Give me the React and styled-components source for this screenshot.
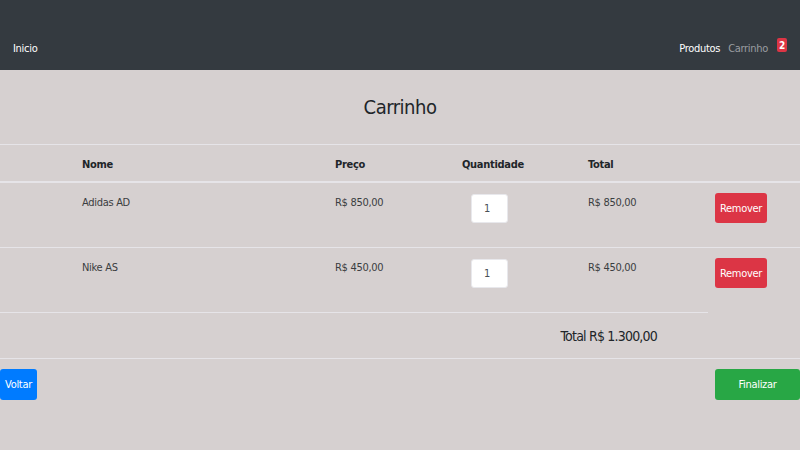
import React from 'react'
import styled, { createGlobalStyle } from 'styled-components'

const Global = createGlobalStyle`
  body {
    margin: 0;
    background: #d6d0d0;
    font-family: "DejaVu Sans Condensed", "Liberation Sans", sans-serif;
    color: #212529;
    letter-spacing: -0.3px;
  }
`

const Nav = styled.nav`
  height: 70px;
  background: #343a40;
  display: flex;
  align-items: flex-end;
  justify-content: space-between;
  padding: 0 13px 15px 13px;
  box-sizing: border-box;
  font-size: 11px;
`

const NavLinks = styled.div`
  display: flex;
  align-items: flex-end;
  gap: 8px;
`

const NavLink = styled.a`
  color: ${p => (p.muted ? '#9a9da1' : '#ffffff')};
  text-decoration: none;
  line-height: 13px;
`

const Badge = styled.span`
  background: #dc3545;
  color: #fff;
  font-weight: bold;
  font-size: 10px;
  border-radius: 2px;
  width: 10px;
  height: 14px;
  display: flex;
  align-items: center;
  justify-content: center;
  align-self: flex-start;
  margin-top: -4px;
  margin-left: 1px;
`

const Title = styled.h1`
  margin: 0;
  height: 74px;
  display: flex;
  align-items: center;
  justify-content: center;
  font-size: 20px;
  font-weight: normal;
  letter-spacing: -0.5px;
  color: #212529;
`

const Row = styled.div`
  display: grid;
  grid-template-columns: 70px 253px 127px 126px 127px 1fr;
  height: ${p => p.h}px;
  font-size: 11px;
`

const Cell = styled.div`
  border-top: 1px solid #e6e4e8;
  padding: ${p => p.pad || '13px 12px 0 12px'};
  color: ${p => (p.dim ? '#3a3d40' : '#212529')};
  font-weight: ${p => (p.bold ? 'bold' : 'normal')};
  ${p => p.head && 'display: flex; align-items: center; padding-top: 3px; border-bottom: 1px solid #e6e4e8;'}
`

const Blank = styled.div``

const QtyInput = styled.input`
  width: 37px;
  height: 29px;
  box-sizing: border-box;
  border: 1px solid #e8e8ec;
  border-radius: 3px;
  background: #fff;
  font-family: "DejaVu Sans Condensed", sans-serif;
  font-size: 11px;
  padding: 0 0 0 12px;
  color: #495057;
  margin-left: 9px;
`

const Button = styled.button`
  background: ${p => p.bg};
  border: none;
  border-radius: 3px;
  color: #fff;
  font-family: "DejaVu Sans Condensed", sans-serif;
  font-size: 11px;
  letter-spacing: -0.3px;
  height: ${p => p.h || 30}px;
  width: ${p => p.w}px;
  padding: 0;
`

const TotalCell = styled.div`
  grid-column: 1 / span 5;
  margin-right: -5px;
  border-top: 1px solid #e6e4e8;
  display: flex;
  align-items: center;
  justify-content: flex-end;
  padding-right: 51px;
  font-size: 14px;
  letter-spacing: -0.8px;
  color: #212529;
`

const Footer = styled.div`
  border-top: 1px solid #e6e4e8;
  display: flex;
  justify-content: space-between;
  padding-top: 10px;
`

const items = [
  { name: 'Adidas AD', price: 'R$ 850,00', qty: 1, total: 'R$ 850,00' },
  { name: 'Nike AS', price: 'R$ 450,00', qty: 1, total: 'R$ 450,00' },
]

export default function App() {
  return (
    <>
      <Global />
      <Nav>
        <NavLink href="#">Inicio</NavLink>
        <NavLinks>
          <NavLink href="#">Produtos</NavLink>
          <NavLink href="#" muted>Carrinho</NavLink>
          <Badge>2</Badge>
        </NavLinks>
      </Nav>
      <Title>Carrinho</Title>
      <Row h={38}>
        <Cell head />
        <Cell head bold>Nome</Cell>
        <Cell head bold>Preço</Cell>
        <Cell head bold>Quantidade</Cell>
        <Cell head bold>Total</Cell>
        <Cell head />
      </Row>
      {items.map((item, i) => (
        <Row h={65} key={i}>
          <Cell />
          <Cell dim>{item.name}</Cell>
          <Cell dim>{item.price}</Cell>
          <Cell pad="11px 12px 0 12px">
            <QtyInput defaultValue={item.qty} />
          </Cell>
          <Cell dim>{item.total}</Cell>
          <Cell pad="10px 12px 0 12px">
            <Button bg="#dc3545" w={52}>Remover</Button>
          </Cell>
        </Row>
      ))}
      <Row h={46}>
        <TotalCell>Total R$ 1.300,00</TotalCell>
        <Blank />
      </Row>
      <Footer>
        <Button bg="#007bff" w={37} h={31}>Voltar</Button>
        <Button bg="#28a745" w={85} h={31}>Finalizar</Button>
      </Footer>
    </>
  )
}
